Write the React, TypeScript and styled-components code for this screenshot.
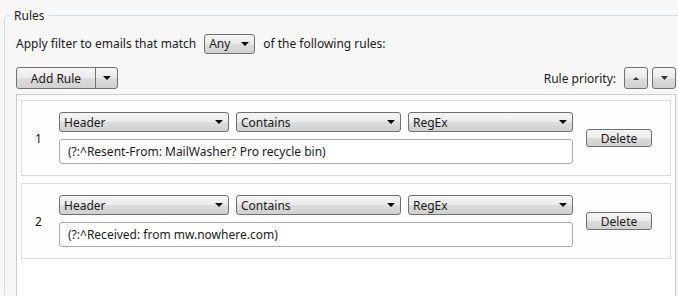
import styled, { createGlobalStyle } from "styled-components";

const GlobalStyle = createGlobalStyle`
  html, body {
    margin: 0;
    padding: 0;
  }
  body {
    width: 678px;
    height: 296px;
    overflow: hidden;
    background: #f7f7f7;
    font-family: "Noto Sans", "Liberation Sans", Arial, sans-serif;
    font-size: 12px;
    color: #1a1a1a;
  }
`;

const Group = styled.fieldset`
  box-sizing: border-box;
  width: 684px;
  min-inline-size: 0;
  margin: 8px 0 0 4px;
  padding: 11px 11px 0 11px;
  border: 1px solid #d5dde3;
  border-radius: 4px;
`;

const Legend = styled.legend`
  margin-left: -6px;
  padding: 0 4px;
  line-height: 15px;
`;

const FilterLine = styled.div`
  display: flex;
  align-items: center;
  gap: 8px;
  height: 20px;
  line-height: 16px;
`;

const winGradient = `linear-gradient(to bottom, #f4f4f4 0%, #ebebeb 48%, #dcdcdc 52%, #d0d0d0 100%)`;

const SelectBox = styled.div<{ $width: number }>`
  box-sizing: border-box;
  display: flex;
  align-items: center;
  justify-content: space-between;
  width: ${(p) => p.$width}px;
  height: 20px;
  padding: 0 5px 0 4px;
  border: 1px solid #707070;
  border-radius: 3px;
  background: ${winGradient};
  white-space: nowrap;
`;

const Toolbar = styled.div`
  display: flex;
  align-items: center;
  justify-content: space-between;
  margin-top: 13px;
  height: 22px;
`;

const SplitButton = styled.div`
  box-sizing: border-box;
  display: flex;
  width: 102px;
  height: 22px;
  border: 1px solid #707070;
  border-radius: 3px;
  background: ${winGradient};
  overflow: hidden;
`;

const SplitMain = styled.div`
  flex: 0 0 78px;
  display: flex;
  align-items: center;
  justify-content: center;
  border-right: 1px solid #707070;
`;

const SplitArrow = styled.div`
  flex: 1;
  display: flex;
  align-items: center;
  justify-content: center;
`;

const Priority = styled.div`
  display: flex;
  align-items: center;
  gap: 4px;
`;

const PriorityLabel = styled.span`
  margin-right: 4px;
`;

const SmallButton = styled.div`
  box-sizing: border-box;
  display: flex;
  align-items: center;
  justify-content: center;
  width: 24px;
  height: 22px;
  border: 1px solid #707070;
  border-radius: 3px;
  background: ${winGradient};
`;

const RuleList = styled.div`
  box-sizing: border-box;
  margin-top: 5px;
  height: 203px;
  padding: 5px 4px;
  border: 1px solid #cbcbcb;
  background: #ffffff;
  overflow: hidden;
`;

const RulePanel = styled.div`
  display: flex;
  align-items: center;
  padding: 11px 18px 11px 0;
  margin-bottom: 7px;
  border: 1px solid #dcdcdc;
  background: #fefefe;
`;

const RuleIndex = styled.div`
  box-sizing: border-box;
  flex: 0 0 37px;
  padding-left: 13px;
`;

const RuleFields = styled.div`
  display: flex;
  flex-direction: column;
  gap: 7px;
`;

const SelectRow = styled.div`
  display: flex;
  gap: 7px;
`;

const PatternInput = styled.div`
  box-sizing: border-box;
  display: flex;
  align-items: center;
  width: 514px;
  height: 25px;
  padding-left: 8px;
  border: 1px solid #a9a9a9;
  border-radius: 3px;
  background: #ffffff;
`;

const DeleteButton = styled.div`
  box-sizing: border-box;
  display: flex;
  align-items: center;
  justify-content: center;
  margin-left: 13px;
  width: 66px;
  height: 18px;
  border: 1px solid #707070;
  border-radius: 3px;
  background: ${winGradient};
`;

function DownArrow({ w = 8, h = 4, color = "#000" }: { w?: number; h?: number; color?: string }) {
  return (
    <svg width={w} height={h} viewBox={`0 0 ${w} ${h}`}>
      <polygon points={`0,0 ${w},0 ${w / 2},${h}`} fill={color} />
    </svg>
  );
}

function UpArrow({ w = 6, h = 3, color = "#333" }: { w?: number; h?: number; color?: string }) {
  return (
    <svg width={w} height={h} viewBox={`0 0 ${w} ${h}`}>
      <polygon points={`0,${h} ${w},${h} ${w / 2},0`} fill={color} />
    </svg>
  );
}

const rules = [
  { field: "Header", op: "Contains", kind: "RegEx", pattern: "(?:^Resent-From: MailWasher? Pro recycle bin)" },
  { field: "Header", op: "Contains", kind: "RegEx", pattern: "(?:^Received: from mw.nowhere.com)" },
];

export default function App() {
  return (
    <>
      <GlobalStyle />
      <Group>
        <Legend>Rules</Legend>
        <FilterLine>
          <span>Apply filter to emails that match</span>
          <SelectBox $width={51}>
            <span>Any</span>
            <DownArrow />
          </SelectBox>
          <span>of the following rules:</span>
        </FilterLine>
        <Toolbar>
          <SplitButton>
            <SplitMain>Add Rule</SplitMain>
            <SplitArrow>
              <DownArrow />
            </SplitArrow>
          </SplitButton>
          <Priority>
            <PriorityLabel>Rule priority:</PriorityLabel>
            <SmallButton>
              <UpArrow />
            </SmallButton>
            <SmallButton>
              <DownArrow w={7} h={4} color="#333" />
            </SmallButton>
          </Priority>
        </Toolbar>
        <RuleList>
          {rules.map((r, i) => (
            <RulePanel key={i}>
              <RuleIndex>{i + 1}</RuleIndex>
              <RuleFields>
                <SelectRow>
                  <SelectBox $width={170}>
                    <span>{r.field}</span>
                    <DownArrow />
                  </SelectBox>
                  <SelectBox $width={165}>
                    <span>{r.op}</span>
                    <DownArrow />
                  </SelectBox>
                  <SelectBox $width={165}>
                    <span>{r.kind}</span>
                    <DownArrow />
                  </SelectBox>
                </SelectRow>
                <PatternInput>{r.pattern}</PatternInput>
              </RuleFields>
              <DeleteButton>Delete</DeleteButton>
            </RulePanel>
          ))}
        </RuleList>
      </Group>
    </>
  );
}
